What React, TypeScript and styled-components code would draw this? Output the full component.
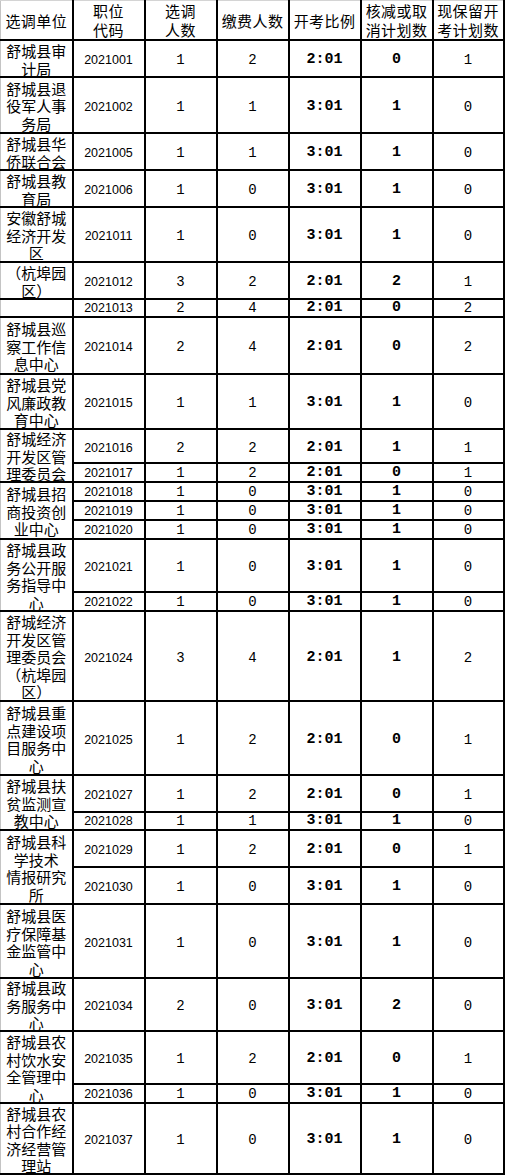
import { FC } from 'react';
import styled, { createGlobalStyle, css } from 'styled-components';

const GlobalStyle = createGlobalStyle`
  html, body {
    margin: 0;
    padding: 0;
    background: #fff;
  }
`;

interface Post {
  code: string;
  need: string;
  paid: string;
  ratio: string;
  cut: string;
  keep: string;
  h: number;
  unit?: string[];
  span?: number;
}

const posts: Post[] = [
  { code: '2021001', need: '1', paid: '2', ratio: '2:01', cut: '0', keep: '1', h: 37, unit: ['舒城县审', '计局'] },
  { code: '2021002', need: '1', paid: '1', ratio: '3:01', cut: '1', keep: '0', h: 56, unit: ['舒城县退', '役军人事', '务局'] },
  { code: '2021005', need: '1', paid: '1', ratio: '3:01', cut: '1', keep: '0', h: 37, unit: ['舒城县华', '侨联合会'] },
  { code: '2021006', need: '1', paid: '0', ratio: '3:01', cut: '1', keep: '0', h: 37, unit: ['舒城县教', '育局'] },
  { code: '2021011', need: '1', paid: '0', ratio: '3:01', cut: '1', keep: '0', h: 55, unit: ['安徽舒城', '经济开发', '区'] },
  { code: '2021012', need: '3', paid: '2', ratio: '2:01', cut: '2', keep: '1', h: 37, unit: ['（杭埠园', '区）'] },
  { code: '2021013', need: '2', paid: '4', ratio: '2:01', cut: '0', keep: '2', h: 18, unit: [] },
  { code: '2021014', need: '2', paid: '4', ratio: '2:01', cut: '0', keep: '2', h: 57, unit: ['舒城县巡', '察工作信', '息中心'] },
  { code: '2021015', need: '1', paid: '1', ratio: '3:01', cut: '1', keep: '0', h: 55, unit: ['舒城县党', '风廉政教', '育中心'] },
  { code: '2021016', need: '2', paid: '2', ratio: '2:01', cut: '1', keep: '1', h: 34, unit: ['舒城经济', '开发区管', '理委员会'], span: 2 },
  { code: '2021017', need: '1', paid: '2', ratio: '2:01', cut: '0', keep: '1', h: 19 },
  { code: '2021018', need: '1', paid: '0', ratio: '3:01', cut: '1', keep: '0', h: 19, unit: ['舒城县招', '商投资创', '业中心'], span: 3 },
  { code: '2021019', need: '1', paid: '0', ratio: '3:01', cut: '1', keep: '0', h: 19 },
  { code: '2021020', need: '1', paid: '0', ratio: '3:01', cut: '1', keep: '0', h: 19 },
  { code: '2021021', need: '1', paid: '0', ratio: '3:01', cut: '1', keep: '0', h: 53, unit: ['舒城县政', '务公开服', '务指导中', '心'], span: 2 },
  { code: '2021022', need: '1', paid: '0', ratio: '3:01', cut: '1', keep: '0', h: 19 },
  { code: '2021024', need: '3', paid: '4', ratio: '2:01', cut: '1', keep: '2', h: 90, unit: ['舒城经济', '开发区管', '理委员会', '（杭埠园', '区）'] },
  { code: '2021025', need: '1', paid: '2', ratio: '2:01', cut: '0', keep: '1', h: 74, unit: ['舒城县重', '点建设项', '目服务中', '心'] },
  { code: '2021027', need: '1', paid: '2', ratio: '2:01', cut: '0', keep: '1', h: 37, unit: ['舒城县扶', '贫监测宣', '教中心'], span: 2 },
  { code: '2021028', need: '1', paid: '1', ratio: '3:01', cut: '1', keep: '0', h: 18 },
  { code: '2021029', need: '1', paid: '2', ratio: '2:01', cut: '0', keep: '1', h: 37, unit: ['舒城县科', '学技术', '情报研究', '所'], span: 2 },
  { code: '2021030', need: '1', paid: '0', ratio: '3:01', cut: '1', keep: '0', h: 37 },
  { code: '2021031', need: '1', paid: '0', ratio: '3:01', cut: '1', keep: '0', h: 74, unit: ['舒城县医', '疗保障基', '金监管中', '心'] },
  { code: '2021034', need: '2', paid: '0', ratio: '3:01', cut: '2', keep: '0', h: 53, unit: ['舒城县政', '务服务中', '心'] },
  { code: '2021035', need: '1', paid: '2', ratio: '2:01', cut: '0', keep: '1', h: 53, unit: ['舒城县农', '村饮水安', '全管理中', '心'], span: 2 },
  { code: '2021036', need: '1', paid: '0', ratio: '3:01', cut: '1', keep: '0', h: 19 },
  { code: '2021037', need: '1', paid: '0', ratio: '3:01', cut: '1', keep: '0', h: 71, unit: ['舒城县农', '村合作经', '济经营管', '理站'] },
];

const headers: string[][] = [
  ['选调单位'],
  ['职位', '代码'],
  ['选调', '人数'],
  ['缴费人数'],
  ['开考比例'],
  ['核减或取', '消计划数'],
  ['现保留开', '考计划数'],
];

const colWidths = [72, 72, 72, 72, 72, 72, 71];

// height of a merged unit cell = sum of the rows it covers
const spanHeight = (i: number) =>
  posts.slice(i, i + (posts[i].span ?? 1)).reduce((s, p) => s + p.h, 0);

const Sheet = styled.table`
  border-collapse: collapse;
  table-layout: fixed;
  width: 503px;
`;

const Row = styled.tr<{ $h: number }>`
  height: ${(p) => p.$h}px;
`;

const HeadCell = styled.th<{ $first?: boolean }>`
  padding: 0;
  border: 2px solid #000;
  border-top: 1px solid #d4d4d4;
  ${(p) => p.$first && css`border-left: 1px solid #c4c4c4;`}
  font-family: 'Noto Sans CJK SC', 'Noto Sans', sans-serif;
  font-size: 15px;
  font-weight: normal;
  letter-spacing: 0.4px;
  line-height: 19px;
  color: #000;
  text-align: center;
  vertical-align: middle;
  white-space: nowrap;
`;

type Kind = 'unit' | 'code' | 'count' | 'bold';

const kinds = {
  unit: css`
    border-left: 1px solid #c4c4c4;
    font-family: 'Noto Sans CJK SC', 'Noto Sans', sans-serif;
    font-size: 15px;
    line-height: 17.5px;
  `,
  code: css`
    font-family: 'Liberation Sans', Arial, sans-serif;
    font-size: 12.5px;
    line-height: 14px;
  `,
  count: css`
    font-family: 'Liberation Mono', 'Courier New', monospace;
    font-size: 14px;
    line-height: 14px;
  `,
  bold: css`
    font-family: 'Liberation Mono', 'Courier New', monospace;
    font-size: 15px;
    font-weight: bold;
    line-height: 14px;
  `,
};

const Cell = styled.td<{ $kind: Kind; $tall?: boolean }>`
  padding: ${(p) => (p.$tall ? '3px 0 0' : '0')};
  border: 2px solid #000;
  color: #000;
  text-align: center;
  vertical-align: middle;
  white-space: nowrap;
  overflow: hidden;
  ${(p) => kinds[p.$kind]}
`;

const UnitBox = styled.div<{ $h: number }>`
  box-sizing: border-box;
  height: ${(p) => p.$h}px;
  padding-top: 2px;
  overflow: hidden;
  display: flex;
  flex-direction: column;
  justify-content: center;
`;

const Line = styled.div`
  display: block;
  flex: none;
`;

const App: FC = () => (
  <>
    <GlobalStyle />
    <Sheet>
      <colgroup>
        {colWidths.map((w, i) => (
          <col key={i} style={{ width: w }} />
        ))}
      </colgroup>
      <thead>
        <Row $h={38}>
          {headers.map((lines, i) => (
            <HeadCell key={i} $first={i === 0}>
              {lines.map((l) => (
                <Line key={l}>{l}</Line>
              ))}
            </HeadCell>
          ))}
        </Row>
      </thead>
      <tbody>
        {posts.map((p, i) => {
          const tall = p.h > 30;
          return (
            <Row key={p.code} $h={p.h}>
              {p.unit && (
                <Cell $kind="unit" rowSpan={p.span ?? 1}>
                  <UnitBox $h={spanHeight(i) - 2}>
                    {p.unit.map((l) => (
                      <Line key={l}>{l}</Line>
                    ))}
                  </UnitBox>
                </Cell>
              )}
              <Cell $kind="code" $tall={tall}>{p.code}</Cell>
              <Cell $kind="count" $tall={tall}>{p.need}</Cell>
              <Cell $kind="count" $tall={tall}>{p.paid}</Cell>
              <Cell $kind="bold" $tall={tall}>{p.ratio}</Cell>
              <Cell $kind="bold" $tall={tall}>{p.cut}</Cell>
              <Cell $kind="count" $tall={tall}>{p.keep}</Cell>
            </Row>
          );
        })}
      </tbody>
    </Sheet>
  </>
);

export default App;
